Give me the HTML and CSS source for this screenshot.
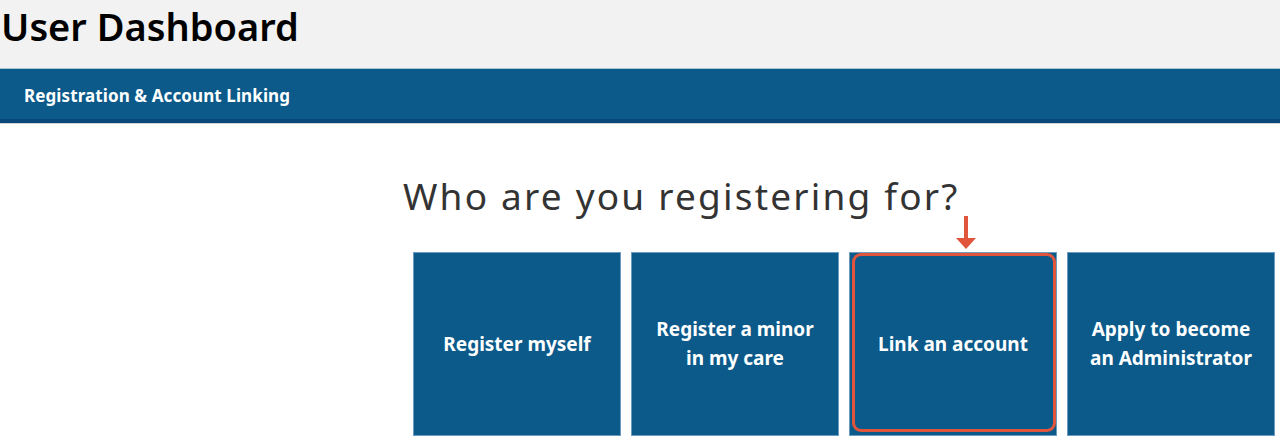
FILE: index.html
```html
<!DOCTYPE html>
<html lang="en">
<head>
<meta charset="utf-8">
<title>User Dashboard</title>
<link rel="stylesheet" href="styles.css">
</head>
<body>
<header class="page-head">
  <h1 class="page-title">User Dashboard</h1>
</header>
<nav class="tabbar">
  <span class="tab-label">Registration &amp; Account Linking</span>
</nav>
<main class="content">
  <h2 class="question">Who are you registering for?</h2>
  <div class="tiles">
    <a class="tile" href="#">Register myself</a>
    <a class="tile" href="#">Register a minor<br>in my care</a>
    <a class="tile tile-highlight" href="#">Link an account
      <svg class="marker-arrow" width="22" height="34" viewBox="0 0 22 34" aria-hidden="true">
        <rect x="9" y="0" width="4" height="24" fill="#e2553d"/>
        <polygon points="1,22 21,22 11,33" fill="#e2553d"/>
      </svg>
    </a>
    <a class="tile" href="#">Apply to become<br>an Administrator</a>
  </div>
</main>
</body>
</html>
```

FILE: styles.css
```css
html, body {
  margin: 0;
  padding: 0;
  background: #ffffff;
  font-family: "Noto Sans", "Open Sans", sans-serif;
}

.page-head {
  background: #f2f2f2;
  height: 68px;
  box-sizing: border-box;
  padding-left: 1px;
  padding-top: 1px;
}

.page-title {
  margin: 0;
  font-size: 38px;
  line-height: 50px;
  font-weight: 600;
  letter-spacing: 0;
  color: #000000;
}

.tabbar {
  background: #0b5a8a;
  border-top: 1px solid #a9c6da;
  border-bottom: 4px solid #08497a;
  height: 50px;
  display: flex;
  align-items: center;
  padding-left: 24px;
  box-shadow: 0 1px 0 #d4d4d4;
}

.tab-label {
  color: #ffffff;
  font-size: 17px;
  font-weight: 700;
  letter-spacing: 0.1px;
  margin-top: 3px;
}

.content {
  padding-left: 403px;
  padding-top: 51px;
}

.question {
  margin: 0;
  font-size: 37px;
  line-height: 44px;
  font-weight: 400;
  color: #333333;
  letter-spacing: 2.2px;
}

.tiles {
  display: flex;
  gap: 10px;
  margin-top: 34px;
  margin-left: 10px;
}

.tile {
  position: relative;
  flex: 0 0 208px;
  height: 184px;
  box-sizing: border-box;
  background: #0b5a8a;
  border: 1px solid #6b9cc0;
  display: flex;
  align-items: center;
  justify-content: center;
  text-align: center;
  color: #ffffff;
  text-decoration: none;
  font-size: 19px;
  line-height: 29px;
  font-weight: 700;
  letter-spacing: 0;
}

.tile-highlight::after {
  content: "";
  position: absolute;
  top: 0;
  left: 2px;
  right: 0;
  bottom: 3px;
  border: 3px solid #e2553d;
  border-radius: 9px;
}

.marker-arrow {
  position: absolute;
  top: -37px;
  left: 105px;
}
```
